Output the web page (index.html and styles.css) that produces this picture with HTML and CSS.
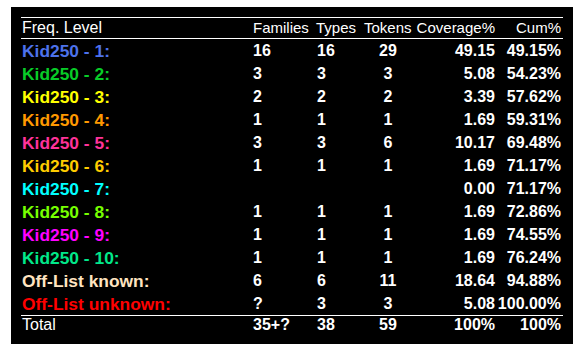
FILE: index.html
```html
<!DOCTYPE html>
<html>
<head>
<meta charset="utf-8">
<link rel="stylesheet" href="styles.css">
</head>
<body>
<div class="box">
<table class="freq">
  <colgroup>
    <col class="c-label"><col class="c-fam"><col class="c-types"><col class="c-tok"><col class="c-cov"><col class="c-cum">
  </colgroup>
  <thead>
    <tr><th class="label">Freq. Level</th><th class="fam">Families</th><th class="types">Types</th><th class="tok">Tokens</th><th class="cov">Coverage%</th><th class="cum">Cum%</th></tr>
  </thead>
  <tbody>
    <tr><td class="label k1">Kid250 - 1:</td><td class="fam">16</td><td class="types">16</td><td class="tok">29</td><td class="cov">49.15</td><td class="cum">49.15%</td></tr>
    <tr><td class="label k2">Kid250 - 2:</td><td class="fam">3</td><td class="types">3</td><td class="tok">3</td><td class="cov">5.08</td><td class="cum">54.23%</td></tr>
    <tr><td class="label k3">Kid250 - 3:</td><td class="fam">2</td><td class="types">2</td><td class="tok">2</td><td class="cov">3.39</td><td class="cum">57.62%</td></tr>
    <tr><td class="label k4">Kid250 - 4:</td><td class="fam">1</td><td class="types">1</td><td class="tok">1</td><td class="cov">1.69</td><td class="cum">59.31%</td></tr>
    <tr><td class="label k5">Kid250 - 5:</td><td class="fam">3</td><td class="types">3</td><td class="tok">6</td><td class="cov">10.17</td><td class="cum">69.48%</td></tr>
    <tr><td class="label k6">Kid250 - 6:</td><td class="fam">1</td><td class="types">1</td><td class="tok">1</td><td class="cov">1.69</td><td class="cum">71.17%</td></tr>
    <tr><td class="label k7">Kid250 - 7:</td><td class="fam"></td><td class="types"></td><td class="tok"></td><td class="cov">0.00</td><td class="cum">71.17%</td></tr>
    <tr><td class="label k8">Kid250 - 8:</td><td class="fam">1</td><td class="types">1</td><td class="tok">1</td><td class="cov">1.69</td><td class="cum">72.86%</td></tr>
    <tr><td class="label k9">Kid250 - 9:</td><td class="fam">1</td><td class="types">1</td><td class="tok">1</td><td class="cov">1.69</td><td class="cum">74.55%</td></tr>
    <tr><td class="label k10">Kid250 - 10:</td><td class="fam">1</td><td class="types">1</td><td class="tok">1</td><td class="cov">1.69</td><td class="cum">76.24%</td></tr>
    <tr><td class="label known">Off-List known:</td><td class="fam">6</td><td class="types">6</td><td class="tok">11</td><td class="cov">18.64</td><td class="cum">94.88%</td></tr>
    <tr><td class="label unknown">Off-List unknown:</td><td class="fam">?</td><td class="types">3</td><td class="tok">3</td><td class="cov">5.08</td><td class="cum">100.00%</td></tr>
  </tbody>
  <tfoot>
    <tr><td class="label">Total</td><td class="fam">35+?</td><td class="types">38</td><td class="tok">59</td><td class="cov">100%</td><td class="cum">100%</td></tr>
  </tfoot>
</table>
</div>
</body>
</html>
```

FILE: styles.css
```css
html, body {
  margin: 0;
  padding: 0;
  background: #ffffff;
}
body {
  font-family: "Liberation Sans", Arial, Helvetica, sans-serif;
}
.box {
  margin: 7px 0 0 11px;
  width: 542px;
  padding: 10px;
  background: #000000;
  color: #ffffff;
}
.freq {
  width: 542px;
  border-collapse: collapse;
  table-layout: fixed;
  font-size: 16px;
}
.c-label { width: 232px; }
.c-fam { width: 61px; }
.c-types { width: 49px; }
.c-tok { width: 50px; }
.c-cov { width: 83px; }
.c-cum { width: 67px; }
.freq th, .freq td {
  padding: 0;
  white-space: nowrap;
  line-height: 18px;
  overflow: visible;
}
.freq thead th {
  font-weight: normal;
  font-size: 15px;
  border-top: 1px solid #ffffff;
  border-bottom: 1px solid #ffffff;
  height: 20px;
  text-align: left;
}
.freq thead th.label { font-size: 16px; }
.freq tbody td {
  height: 23px;
  font-weight: bold;
}
.freq tbody td.label { font-size: 17.4px; }
.freq tfoot td {
  border-top: 1px solid #ffffff;
  font-weight: bold;
  height: 18px;
  vertical-align: top;
}
.freq tfoot td.label { font-weight: normal; }
.freq .label { padding-left: 1px; text-align: left; }
.freq .fam { text-align: left; }
.freq .types { text-align: left; padding-left: 3px; }
.freq thead .types { padding-left: 2px; }
.freq .tok { text-align: center; }
.freq thead .tok { text-align: left; padding-left: 1px; }
.freq .cov { text-align: right; padding-right: 1px; }
.freq .cum { text-align: right; padding-right: 2px; }
.k1 { color: #4d72ec; }
.k2 { color: #08cc28; }
.k3 { color: #ffff00; }
.k4 { color: #ff9900; }
.k5 { color: #ff3399; }
.k6 { color: #ffcc00; }
.k7 { color: #00ffff; }
.k8 { color: #77ff00; }
.k9 { color: #ff00ff; }
.k10 { color: #00e88a; }
.known { color: #ffe4c0; }
.unknown { color: #ff0000; }
```
